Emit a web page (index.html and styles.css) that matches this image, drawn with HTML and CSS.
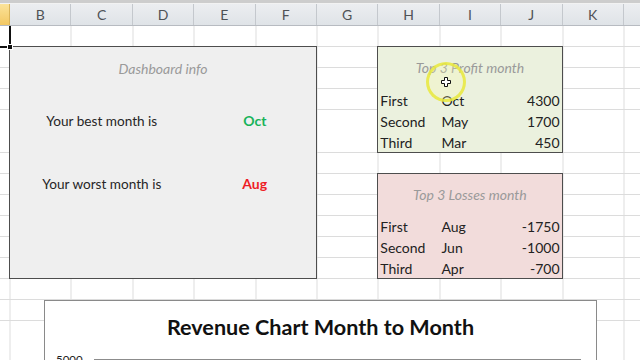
FILE: index.html
```html
<!DOCTYPE html>
<html lang="en">
<head>
  <meta charset="UTF-8">
  <meta name="viewport" content="width=device-width, initial-scale=1.0">
  <title>Revenue Dashboard</title>
  <link rel="stylesheet" href="styles.css">
</head>
<body>
  <div class="topbar"></div>

  <!-- Column letters -->
  <div class="col-headers">
    <div class="hdr selected"></div>
    <div class="hdr">B</div>
    <div class="hdr">C</div>
    <div class="hdr">D</div>
    <div class="hdr">E</div>
    <div class="hdr">F</div>
    <div class="hdr">G</div>
    <div class="hdr">H</div>
    <div class="hdr">I</div>
    <div class="hdr">J</div>
    <div class="hdr">K</div>
    <div class="hdr"></div>
  </div>

  <div class="sheet">
    <div class="active-cell"><span class="fill-handle"></span></div>

    <!-- Dashboard info block B2:F12 -->
    <div class="panel dashboard">
      <div class="panel-title">Dashboard info</div>
      <div class="info-label best-row">Your best month is</div>
      <div class="info-value good best-row">Oct</div>
      <div class="info-label worst-row">Your worst month is</div>
      <div class="info-value bad worst-row">Aug</div>
    </div>

    <!-- Top 3 profit H2:J6 -->
    <div class="panel top-table profit">
      <div class="panel-title">Top 3 Profit month</div>
      <div class="cell">First</div><div class="cell">Oct</div><div class="cell num">4300</div>
      <div class="cell">Second</div><div class="cell">May</div><div class="cell num">1700</div>
      <div class="cell">Third</div><div class="cell">Mar</div><div class="cell num">450</div>
    </div>

    <!-- Top 3 losses H8:J12 -->
    <div class="panel top-table losses">
      <div class="panel-title">Top 3 Losses month</div>
      <div class="cell">First</div><div class="cell">Aug</div><div class="cell num">-1750</div>
      <div class="cell">Second</div><div class="cell">Jun</div><div class="cell num">-1000</div>
      <div class="cell">Third</div><div class="cell">Apr</div><div class="cell num">-700</div>
    </div>

    <!-- Floating chart object -->
    <div class="chart">
      <div class="chart-title">Revenue Chart Month to Month</div>
      <div class="axis-row">
        <span class="axis-label">5000</span>
        <span class="axis-line"></span>
      </div>
    </div>

    <!-- Mouse click highlight -->
    <div class="click-ring">
      <svg width="10" height="10" viewBox="0 0 10 10">
        <path d="M3.5 0.5h3v3h3v3h-3v3h-3v-3h-3v-3h3z" fill="#fff" stroke="#111" stroke-width="1"/>
      </svg>
    </div>
  </div>
</body>
</html>
```

FILE: styles.css
```css
/* Base */
html, body {
  margin: 0;
  padding: 0;
}

body {
  width: 640px;
  height: 360px;
  overflow: hidden;
  background: #fff;
  font-family: Lato, "Liberation Sans", sans-serif;
  font-size: 14px;
  color: #1e1e1e;
}

.topbar {
  height: 3px;
  background: #cdcdcd;
  border-bottom: 1px solid #f2f2f2;
}

/* Column headers */
.col-headers {
  display: grid;
  grid-template-columns: 10px repeat(11, 61.4px);
  height: 21px;
  background: linear-gradient(#eceef1, #dfe3e7);
  border-bottom: 1px solid #b7bbc1;
}

.hdr {
  border-right: 1px solid #c4c8cd;
  display: flex;
  align-items: center;
  justify-content: center;
  color: #4f5256;
  font-size: 14px;
}

.hdr.selected {
  background: linear-gradient(#fbe39a, #f3c863);
  border-right-color: #d9b45a;
}

/* Sheet grid */
.sheet {
  position: relative;
  display: grid;
  grid-template-columns: 10px repeat(11, 61.4px);
  grid-template-rows: repeat(16, 21.1px);
  background-image:
    repeating-linear-gradient(to right, #dcdcdc 0 1px, transparent 1px 61.4px),
    repeating-linear-gradient(to bottom, transparent 0 20.1px, #dcdcdc 20.1px 21.1px);
  background-position: 9.5px 0, 0 0;
}

.active-cell {
  grid-column: 1;
  grid-row: 1;
  position: relative;
  margin-left: -4px;
  margin-bottom: -1px;
  margin-right: -1px;
  border: 2px solid #111;
  border-top: none;
}

.fill-handle {
  position: absolute;
  right: -4px;
  bottom: -4px;
  width: 4px;
  height: 4px;
  background: #111;
  border: 1px solid #fff;
}

/* Panels */
.panel {
  border: 1px solid #4d4d4d;
  margin: -1px 0 0 -1px;
  display: grid;
}

.panel-title {
  grid-column: 1 / -1;
  grid-row: 1 / 3;
  display: flex;
  align-items: center;
  justify-content: center;
  font-style: italic;
  color: #9a9a9a;
}

.dashboard {
  grid-column: 2 / 7;
  grid-row: 2 / 13;
  background: #efefef;
  grid-template-columns: repeat(5, 1fr);
  grid-template-rows: repeat(11, 1fr);
}

.info-label,
.info-value {
  display: flex;
  align-items: center;
  justify-content: center;
  color: #262626;
}

.info-label {
  grid-column: 1 / 4;
  font-size: 13.6px;
}

.info-value {
  grid-column: 4 / 6;
  font-weight: bold;
}

.best-row {
  grid-row: 4;
}

.worst-row {
  grid-row: 7;
}

.info-value.good {
  color: #17b35a;
}

.info-value.bad {
  color: #ee1c25;
}

.top-table {
  grid-column: 8 / 11;
  grid-template-columns: repeat(3, 1fr);
  grid-template-rows: repeat(5, 1fr);
}

.profit {
  grid-row: 2 / 7;
  background: #ebf1de;
}

.losses {
  grid-row: 8 / 13;
  background: #f2dcdb;
}

.cell {
  display: flex;
  align-items: flex-end;
  padding: 0 2px 1px 2px;
  color: #222;
}

.cell.num {
  justify-content: flex-end;
}

/* Chart object */
.chart {
  position: absolute;
  left: 44px;
  top: 274px;
  width: 551px;
  height: 120px;
  background: #fff;
  border: 1px solid #8a8a8a;
}

.chart-title {
  text-align: center;
  font-weight: bold;
  font-size: 21.6px;
  color: #111;
  margin-top: 13px;
}

.axis-row {
  display: flex;
  align-items: center;
  margin-top: 13px;
  padding-left: 11px;
}

.axis-label {
  font-size: 11.5px;
  color: #222;
  width: 38px;
}

.axis-line {
  width: 487px;
  height: 1px;
  background: #8c8c8c;
}

/* Click highlight overlay */
.click-ring {
  position: absolute;
  left: 426px;
  top: 36px;
  width: 34px;
  height: 34px;
  border: 3px solid rgba(232, 232, 60, 0.85);
  border-radius: 50%;
  background: rgba(250, 250, 170, 0.25);
  display: flex;
  align-items: center;
  justify-content: center;
}
```
